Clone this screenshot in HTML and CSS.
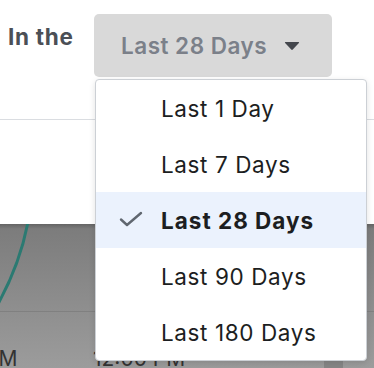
FILE: index.html
```html
<!DOCTYPE html>
<html>
<head>
<meta charset="utf-8">
<link rel="stylesheet" href="styles.css">
</head>
<body>
<div class="page">
  <div class="header">
    <span class="label">In the</span>
    <button class="select">
      <span class="select-text">Last 28 Days</span>
      <svg class="caret" width="16" height="10" viewBox="0 0 16 10"><path d="M1.5 1 H14.5 Q15.6 1 14.9 1.9 L8.8 8.6 Q8 9.4 7.2 8.6 L1.1 1.9 Q0.4 1 1.5 1 Z" fill="#44474d"/></svg>
    </button>
  </div>
  <div class="spacer"></div>
  <svg class="chart" width="374" height="144" viewBox="0 0 374 144">
    <defs>
      <linearGradient id="bg" x1="0" y1="0" x2="0" y2="1">
        <stop offset="0" stop-color="#7b7b7b"/>
        <stop offset="1" stop-color="#9c9c9c"/>
      </linearGradient>
      <linearGradient id="sh" x1="0" y1="0" x2="0" y2="1">
        <stop offset="0" stop-color="rgba(0,0,0,0.18)"/>
        <stop offset="1" stop-color="rgba(0,0,0,0)"/>
      </linearGradient>
    </defs>
    <rect x="0" y="0" width="374" height="144" fill="url(#bg)"/>
    <rect x="0" y="0" width="374" height="5" fill="url(#sh)"/>
    <line x1="0" y1="87.5" x2="374" y2="87.5" stroke="#808080" stroke-width="1"/>
    <rect x="324" y="137" width="19" height="7" fill="#868686"/>
    <path d="M28 -2 Q20 40 -2 80" fill="none" stroke="#2b7a72" stroke-width="3"/>
    <text x="17.5" y="142" text-anchor="end" class="axis">12:00 AM</text>
    <text x="93" y="142" class="axis">12:00 PM</text>
  </svg>
  <div class="menu">
    <div class="item">Last 1 Day</div>
    <div class="item">Last 7 Days</div>
    <div class="item selected">
      <svg class="check" width="24" height="16" viewBox="0 0 24 16"><path d="M2 8.5 L8 14 L22 2" fill="none" stroke="#606770" stroke-width="2.4" stroke-linecap="round" stroke-linejoin="round"/></svg>
      Last 28 Days
    </div>
    <div class="item">Last 90 Days</div>
    <div class="item">Last 180 Days</div>
  </div>
</div>
</body>
</html>
```
FILE: styles.css
```css
html, body {
  margin: 0;
  padding: 0;
  background: #ffffff;
}
body {
  font-family: Inter, "Noto Sans", sans-serif;
  width: 374px;
  height: 368px;
  overflow: hidden;
}
.page {
  position: relative;
  width: 374px;
  height: 368px;
}
.header {
  border-bottom: 1px solid #dadde1;
  display: flex;
  align-items: flex-start;
  padding: 14px 0 0 8px;
  height: 105px;
}
.label {
  font-size: 22.5px;
  font-weight: 700;
  color: #4b4f56;
  margin-top: 9px;
  width: 86px;
  letter-spacing: 0.7px;
}
.select {
  width: 238px;
  height: 63px;
  background: #d9d9d9;
  border: none;
  border-radius: 5px;
  display: flex;
  align-items: center;
  padding: 0 0 0 27px;
  margin: 0;
  font-family: inherit;
  cursor: pointer;
}
.select-text {
  font-size: 22.5px;
  font-weight: 600;
  color: #7b8089;
  letter-spacing: 0.5px;
}
.caret {
  margin-left: 17px;
  margin-top: 1px;
}
.spacer {
  height: 104px;
}
.chart {
  display: block;
}
.axis {
  font-family: Inter, "Noto Sans", sans-serif;
  font-size: 21px;
  fill: #333333;
}
.menu {
  position: absolute;
  left: 95px;
  top: 79px;
  width: 270px;
  background: #ffffff;
  border: 1px solid #ccd0d5;
  border-radius: 4px;
  box-shadow: 0 2px 6px rgba(0, 0, 0, 0.12);
  overflow: hidden;
}
.item {
  position: relative;
  height: 56px;
  display: flex;
  align-items: center;
  padding-left: 65px;
  font-size: 22.5px;
  color: #1c1e21;
  letter-spacing: 0.6px;
}
.item.selected {
  background: #ebf2fd;
  font-weight: 700;
  letter-spacing: 1px;
}
.check {
  position: absolute;
  left: 23px;
  top: 19px;
}
```
